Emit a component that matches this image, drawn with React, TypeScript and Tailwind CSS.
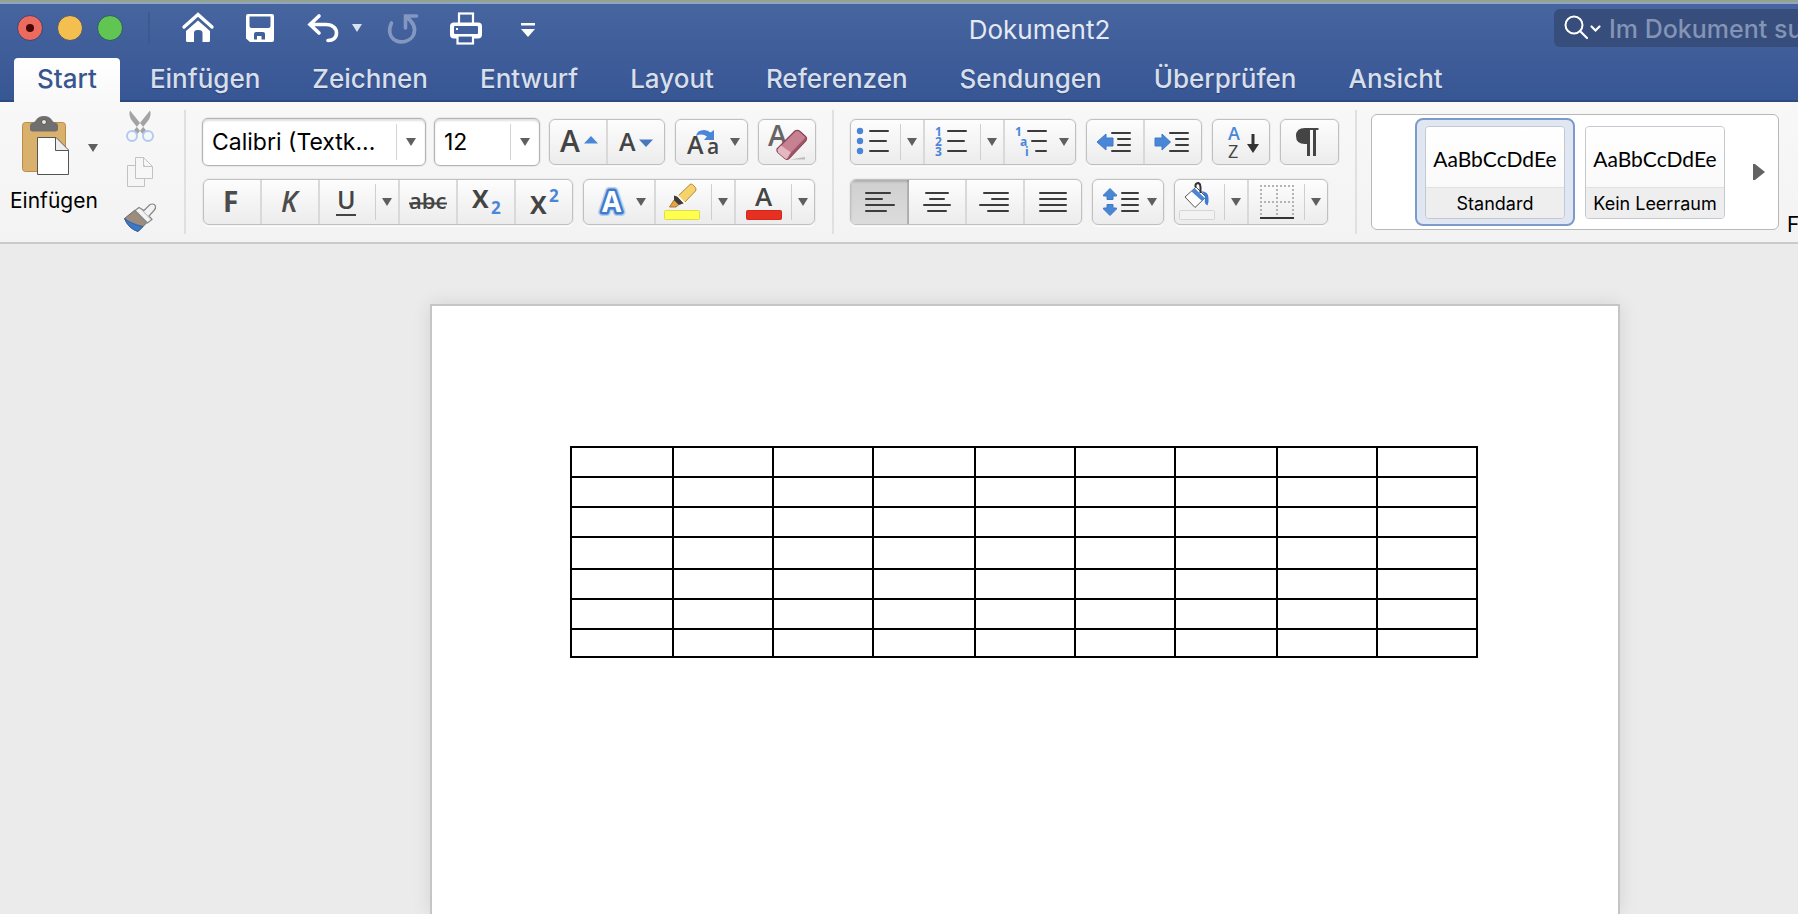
import type { ReactNode } from "react";

const INK = "#444";
const BLUE = "#4a86d8";

/* Icons are drawn in window coordinates, so the view box gives both place and size. */
function Icon({ x, y, w, h = 44, children }: { x: number; y: number; w: number; h?: number; children: ReactNode }) {
  return (
    <svg aria-hidden="true" width={w} height={h} viewBox={`${x} ${y} ${w} ${h}`} className="block shrink-0">
      {children}
    </svg>
  );
}

function Caret({ className = "fill-[#5f5f5f]" }: { className?: string }) {
  return (
    <svg aria-hidden="true" width="10" height="8" viewBox="0 0 10 8" className={`block shrink-0 ${className}`}>
      <path d="M0 0H10L5 8Z" />
    </svg>
  );
}

function Group({ children }: { children: ReactNode }) {
  return (
    <div className="flex h-[46px] shrink-0 overflow-hidden rounded-md border border-[#c0c0c0] bg-linear-to-b from-[#fdfdfd] to-[#ececec] shadow-[0_0_0_1px_rgba(0,0,0,0.04),0_2px_0_rgba(255,255,255,0.8)]">
      {children}
    </div>
  );
}

function Tool({ label, line = false, active = false, children }: { label: string; line?: boolean; active?: boolean; children: ReactNode }) {
  return (
    <button
      type="button"
      aria-label={label}
      title={label}
      aria-pressed={active || undefined}
      className={`relative block shrink-0 ${active ? "bg-linear-to-b from-[#cfcfcf] to-[#dcdcdc] shadow-[inset_0_2px_2px_rgba(0,0,0,0.15),inset_-2px_0_0_#b4b4b4]" : line ? "shadow-[inset_-2px_0_0_#d9d9d9]" : ""}`}
    >
      {children}
    </button>
  );
}

function More({ label, line = false }: { label: string; line?: boolean }) {
  return (
    <>
      <span className="my-1 w-px shrink-0 bg-[#cfcfcf]" />
      <button
        type="button"
        aria-label={label}
        className={`flex items-center justify-center ${line ? "w-6 pr-[2px] shadow-[inset_-2px_0_0_#d9d9d9]" : "w-[22px]"}`}
      >
        <Caret />
      </button>
    </>
  );
}

function Combo({ label, value, className }: { label: string; value: string; className: string }) {
  return (
    <div className={`flex h-12 shrink-0 items-center rounded-md border border-[#b4b4b4] bg-white shadow-[inset_0_2px_2px_rgba(0,0,0,0.12),0_0_0_1px_rgba(0,0,0,0.05)] ${className}`}>
      <select aria-label={label} defaultValue={value} className="min-w-0 flex-1 appearance-none bg-transparent pl-[9px] text-[23px] leading-8 text-black outline-none">
        <option>{value}</option>
      </select>
      <span className="h-9 w-px bg-[#d4d4d4]" />
      <span className="pointer-events-none flex w-7 justify-center">
        <Caret />
      </span>
    </div>
  );
}

function Divider() {
  return <span className="mt-2 h-[124px] w-[2px] shrink-0 bg-[#e0e0e0]" />;
}

/* Horizontal text lines: [x1, x2, y] */
function Lines({ at }: { at: number[][] }) {
  return (
    <g stroke="#3c3c3c" strokeWidth="2" strokeLinecap="round">
      {at.map(([a, b, y]) => (
        <line key={y} x1={a + 1} x2={b - 1} y1={y} y2={y} />
      ))}
    </g>
  );
}

function IconCaret({ x, y }: { x: number; y: number }) {
  return <path d={`M${x} ${y}h10l-5 8z`} fill="#5f5f5f" />;
}

const sans = { fontFamily: '"Open Sans", sans-serif' };

function TitleBar() {
  return (
    <div className="flex h-12 shrink-0 items-start">
      <div className="flex gap-[14px] pt-[11px] pl-[17px]">
        <button type="button" aria-label="Schließen" className="flex size-[26px] items-center justify-center rounded-full border border-[#3d4673] bg-[#ec6a5e]">
          <span className="size-2 rounded-full bg-[#460804]" />
        </button>
        <button type="button" aria-label="Minimieren" className="size-[26px] rounded-full border border-[#4a5573] bg-[#f5bf4f]" />
        <button type="button" aria-label="Vergrößern" className="size-[26px] rounded-full border border-[#2c5a6a] bg-[#61c554]" />
      </div>
      <span className="mt-2 ml-[25px] h-8 w-[2px] bg-[#3e598f]" />
      <div className="ml-[28px] flex pt-[4px]">
        <button type="button" aria-label="Startseite">
          <Icon x={178} y={8} w={40} h={40}>
            <path d="M184 27L198 14.500L212 27" fill="none" stroke="#fff" strokeWidth="3.4" strokeLinecap="round" />
            <path d="M198 20.500L210 31V40.500Q210 42 208.500 42H202.500V33Q202.500 30 198.500 30H197.500Q194 30 194 33V42H187.500Q186 42 186 40.500V31Z" fill="#fff" />
          </Icon>
        </button>
        <button type="button" aria-label="Speichern" className="ml-[14px]">
          <Icon x={232} y={8} w={56} h={40}>
            <path fillRule="evenodd" fill="#fff" d="M248 14H272Q274 14 274 16V40Q274 42 272 42H250L246 38.500V16Q246 14 248 14ZM249.500 16.500V26Q249.500 28 251.500 28H268.500Q270.500 28 270.500 26V16.500ZM256 32Q254 32 254 34V39.500H257V36H261.500V39.500H265V34Q265 32 263 32Z" />
          </Icon>
        </button>
        <button type="button" aria-label="Rückgängig" className="ml-[14px]">
          <Icon x={302} y={8} w={40} h={40}>
            <path d="M319 16L310 24.500L319 33M311 24.500H326C333 24.500 336.500 28.500 336.500 33C336.500 38 333 40.500 328 40.500" fill="none" stroke="#fff" strokeWidth="3.6" strokeLinecap="round" />
          </Icon>
        </button>
        <button type="button" aria-label="Rückgängig-Verlauf" className="flex w-[30px] items-center justify-center">
          <Caret className="fill-[#dbe2ef]" />
        </button>
        <button type="button" aria-label="Wiederholen" disabled className="ml-[12px]">
          <Icon x={384} y={8} w={40} h={40}>
            <path d="M391.500 23C388 30 389.500 37 395.500 40.500C402 43.500 410 41.500 413.500 35C416.500 28 413 22 406.500 17M405.500 28V16H416.500" fill="none" stroke="#8397c0" strokeWidth="3.6" strokeLinecap="round" />
          </Icon>
        </button>
        <button type="button" aria-label="Drucken" className="ml-[22px]">
          <Icon x={446} y={8} w={40} h={40}>
            <rect x="459" y="13.500" width="14" height="14" fill="none" stroke="#fff" strokeWidth="2.2" />
            <rect x="450" y="22.500" width="32" height="16" rx="4" fill="#fff" />
            <rect x="454" y="26" width="24" height="8" rx="1" fill="#43619e" />
            <rect x="456" y="28" width="2" height="2" fill="#fff" />
            <rect x="457.500" y="35.500" width="15.500" height="8" fill="#3f5d9a" stroke="#fff" strokeWidth="2.2" />
          </Icon>
        </button>
        <button type="button" aria-label="Symbolleiste anpassen" className="ml-[22px]">
          <Icon x={508} y={8} w={40} h={40}>
            <path d="M521 23H535V25.500H521ZM521 29H535L528 37Z" fill="#fff" />
          </Icon>
        </button>
      </div>
      <h1 className="flex-1 pt-[10px] pr-[23px] text-center text-[26px] leading-8 text-[#e4e9f3]">Dokument2</h1>
      <label className="mt-[5px] flex h-[38px] w-[244px] shrink-0 items-center overflow-hidden rounded-l-md bg-[#374d7c] pl-[9px]">
        <Icon x={1564} y={12} w={40} h={32}>
          <circle cx="1575" cy="25" r="8.500" fill="none" stroke="#fff" strokeWidth="2" />
          <path d="M1581 31L1588 38M1592.500 26.500L1596.500 30.500L1600.500 26.500" fill="none" stroke="#fff" strokeWidth="2.2" strokeLinecap="round" />
        </Icon>
        <input type="text" aria-label="Im Dokument suchen" placeholder="Im Dokument suchen" className="w-80 shrink-0 bg-transparent pt-[2px] pl-[6px] text-[25px] leading-8 font-medium text-white outline-none placeholder:text-[#8494b6]" />
      </label>
    </div>
  );
}

const TABS = ["Start", "Einfügen", "Zeichnen", "Entwurf", "Layout", "Referenzen", "Sendungen", "Überprüfen", "Ansicht"];

function Tabs() {
  return (
    <nav className="flex flex-1 items-end gap-2 pl-[14px]">
      {TABS.map((tab) => (
        <a
          key={tab}
          href="#"
          aria-current={tab === "Start" ? "page" : undefined}
          className={`relative -mb-[2px] block h-11 pt-[5px] text-[26px] leading-8 font-medium ${tab === "Start" ? "rounded-t bg-linear-to-b from-white to-[#f8f8f8] px-[23px] text-[#37568f]" : "px-[22px] text-[#d8dfec] [text-shadow:0_1px_1px_rgba(0,0,0,0.25)]"}`}
        >
          {tab}
        </a>
      ))}
    </nav>
  );
}

function ClipboardSection() {
  return (
    <div className="flex shrink-0">
      <button type="button" className="mt-3 ml-2 flex w-[94px] flex-col items-start">
        <Icon x={8} y={114} w={94} h={64}>
          <rect x="22.500" y="122.500" width="43" height="49" rx="3" fill="#d9b06c" stroke="#b98d48" />
          <path d="M33 131.500Q30 131.500 30 129V126Q30 123 33 122.500C36 122.500 36 116 44 116C52 116 52 122.500 55 122.500Q58 123 58 126V129Q58 131.500 55 131.500Z" fill="#6f6f6f" />
          <circle cx="44" cy="122" r="2.500" fill="#f0e6d4" stroke="#555" />
          <path d="M37.500 137.500H56L68.500 150V174.500H37.500Z" fill="#fff" stroke="#555" />
          <path d="M55.500 138V150.500H68" fill="#eee" stroke="#555" />
          <IconCaret x={88} y={144} />
        </Icon>
        <span className="mt-[11px] pl-[2px] text-[21px] leading-6 text-black">Einfügen</span>
      </button>
      <div className="mt-[6px] ml-5 flex flex-col gap-[10px]">
        <button type="button" aria-label="Ausschneiden">
          <Icon x={122} y={108} w={36} h={36}>
            <path d="M130 110.500L146.500 131L142.500 134L131 119.500Q128.500 114 130 110.500ZM150 110.500L133.500 131L137.500 134L149 119.500Q151.500 114 150 110.500Z" fill="#a3a3a3" />
            <circle cx="132" cy="136" r="5" fill="#f4f7fc" stroke="#b3caee" strokeWidth="2" />
            <circle cx="148" cy="136" r="5" fill="#f4f7fc" stroke="#b3caee" strokeWidth="2" />
          </Icon>
        </button>
        <button type="button" aria-label="Kopieren">
          <Icon x={122} y={154} w={36} h={36}>
            <path d="M127.500 165.500H144.500V186.500H127.500Z" fill="#f5f5f5" stroke="#c2c2c2" />
            <path d="M135.500 157.500H143.500L152.500 166.500V178.500H135.500ZM143.500 157.500V166.500H152.500" fill="#f7f7f7" stroke="#c2c2c2" />
          </Icon>
        </button>
        <button type="button" aria-label="Format übertragen">
          <Icon x={122} y={200} w={36} h={36}>
            <path d="M124.500 218.500L135 210L147 222.500L138 231.500Q129 229 124.500 218.500Z" fill="#9c8c7e" stroke="#75665a" />
            <path d="M124.500 218.500Q131 224 143 226.500L138 231.500Q128 228 124.500 218.500Z" fill="#3c78c8" stroke="#2f62a8" />
            <path d="M135 210.500L139 207.500L144 210.500L150 204.500Q154 203 155.500 206Q156 208.500 154 210.500L149 216L152 219.500L147.500 223Z" fill="#f2f2f2" stroke="#868686" strokeWidth="1.200" />
            <path d="M141 209L150 218.500" stroke="#b0b0b0" />
          </Icon>
        </button>
      </div>
    </div>
  );
}

function FontSection() {
  return (
    <div className="mt-4 ml-4 flex shrink-0 flex-col gap-[13px]">
      <div className="flex items-center">
        <Combo label="Schriftart" value="Calibri (Textk..." className="w-[224px]" />
        <Combo label="Schriftgrad" value="12" className="ml-2 w-[106px]" />
        <div className="ml-[9px] flex gap-[10px]">
          <Group>
            <Tool label="Schrift vergrößern" line>
              <Icon x={550} y={120} w={58}>
                <text x="560" y="152" fontSize="30" fontWeight="600" fill={INK} style={sans}>A</text>
                <path d="M584 143.500L591 136L598 143.500Z" fill={BLUE} />
              </Icon>
            </Tool>
            <Tool label="Schrift verkleinern">
              <Icon x={608} y={120} w={56}>
                <text x="619" y="151" fontSize="25" fontWeight="600" fill={INK} style={sans}>A</text>
                <path d="M639 139.500H653L646 147Z" fill="#4678bd" />
              </Icon>
            </Tool>
          </Group>
          <Group>
            <Tool label="Groß-/Kleinschreibung">
              <Icon x={676} y={120} w={71}>
                <text x="687" y="154" fontSize="25" fontWeight="600" fill={INK} style={sans}>A</text>
                <text x="707" y="154" fontSize="21" fontWeight="600" fill={INK} style={sans}>a</text>
                <path d="M696 136Q697 130 704 130Q708 130 710.500 132.500L714 130V140H704L707 136.500Q702 133 696 136Z" fill={BLUE} />
                <IconCaret x={730} y={138} />
              </Icon>
            </Tool>
          </Group>
          <Group>
            <Tool label="Formatierung löschen">
              <Icon x={758} y={120} w={56}>
                <text x="767" y="146" fontSize="29" fontWeight="600" fill="#666" style={sans}>A</text>
                <path d="M789 159.500L804 157V159.500Z" fill="#bbb" />
                <path d="M776 149L794 131Q796.500 129.500 799 131.500L804.500 136.500Q806.500 138.500 804.500 141L788 158.500Q786 160 784 158.500L777 152.500Q775.500 151 776 149Z" fill="#c78291" stroke="#8b4456" strokeWidth="1.300" />
                <path d="M776.500 149.500L780 145.500L790 152.500L786 159L784 158.500L777 152.500Z" fill="#e4b7c1" />
                <path d="M790 152.500L805 137V140L788 158.500L786 159Z" fill="#a05468" />
              </Icon>
            </Tool>
          </Group>
        </div>
      </div>
      <div className="flex gap-[10px] pl-px">
        <Group>
          <Tool label="Fett" line>
            <Icon x={204} y={180} w={58}>
              <text x="223" y="212" fontSize="28" fontWeight="700" fill="#4c4c4c" style={sans}>F</text>
            </Icon>
          </Tool>
          <Tool label="Kursiv" line>
            <Icon x={262} y={180} w={58}>
              <text x="281" y="212" fontSize="28" fontWeight="600" fontStyle="italic" fill="#4c4c4c" style={sans}>K</text>
            </Icon>
          </Tool>
          <Tool label="Unterstrichen">
            <Icon x={320} y={180} w={55}>
              <text x="337" y="209" fontSize="25" fontWeight="600" fill={INK} style={sans}>U</text>
              <path d="M336 215H356" stroke={INK} strokeWidth="2" />
            </Icon>
          </Tool>
          <More label="Unterstreichungsart" line />
          <Tool label="Durchgestrichen" line>
            <Icon x={400} y={180} w={58}>
              <text x="409" y="209" fontSize="22" fontWeight="600" fill={INK} style={sans}>abc</text>
              <path d="M409 203.500H447" stroke={INK} strokeWidth="2" />
            </Icon>
          </Tool>
          <Tool label="Tiefgestellt" line>
            <Icon x={458} y={180} w={58}>
              <text x="472" y="208" fontSize="25" fontWeight="700" fill={INK} style={sans}>X</text>
              <text x="491" y="214" fontSize="17" fontWeight="700" fill={BLUE} style={sans}>2</text>
            </Icon>
          </Tool>
          <Tool label="Hochgestellt">
            <Icon x={516} y={180} w={56}>
              <text x="530" y="214" fontSize="25" fontWeight="700" fill={INK} style={sans}>X</text>
              <text x="549" y="202" fontSize="17" fontWeight="700" fill={BLUE} style={sans}>2</text>
            </Icon>
          </Tool>
        </Group>
        <Group>
          <Tool label="Texteffekte" line>
            <Icon x={584} y={180} w={72}>
              <text x="602" y="212" fontSize="28" fontWeight="700" fill="#9cc0ef" stroke="#9cc0ef" strokeWidth="8" strokeLinejoin="round" opacity="0.7" style={sans}>A</text>
              <text x="602" y="212" fontSize="28" fontWeight="700" fill="#fff" stroke="#3f7dcc" strokeWidth="5" strokeLinejoin="round" paintOrder="stroke" style={sans}>A</text>
              <IconCaret x={636} y={198} />
            </Icon>
          </Tool>
          <Tool label="Texthervorhebungsfarbe">
            <Icon x={656} y={180} w={55}>
              <rect x="664.500" y="210.500" width="35" height="9" rx="1" fill="#ffff4d" stroke="#dcdc50" />
              <path d="M669.500 207L674 200L679 204.500L676 207Z" fill="#e2a446" stroke="#a87a35" />
              <path d="M674 195.500L678.500 197L684.500 203L679 205L674 200Z" fill="#3c3c3c" />
              <path d="M677.500 196.500L690 184.500Q691 183.500 692.500 184.500L695.500 187.500Q696.500 189 695.500 191L684 203Z" fill="#f6d26d" stroke="#b38a3c" />
              <path d="M677.500 195.500L685 203.500" stroke="#fff" strokeWidth="1.800" />
            </Icon>
          </Tool>
          <More label="Weitere Hervorhebungsfarben" line />
          <Tool label="Schriftfarbe">
            <Icon x={736} y={180} w={55}>
              <text x="755" y="206" fontSize="26" fontWeight="600" fill={INK} style={sans}>A</text>
              <rect x="746.500" y="210.500" width="35" height="9" rx="1" fill="#e63022" stroke="#d02a1e" />
            </Icon>
          </Tool>
          <More label="Weitere Schriftfarben" />
        </Group>
      </div>
    </div>
  );
}

function ParagraphSection() {
  return (
    <div className="mt-[17px] ml-4 flex shrink-0 flex-col gap-[14px]">
      <div className="flex gap-[10px]">
        <Group>
          <Tool label="Aufzählungszeichen">
            <Icon x={852} y={120} w={49}>
              <g fill={BLUE}>
                <circle cx="861" cy="131" r="3.200" />
                <circle cx="861" cy="141" r="3.200" />
                <circle cx="861" cy="151" r="3.200" />
              </g>
              <Lines at={[[870, 890, 131], [870, 888, 141], [870, 890, 151]]} />
            </Icon>
          </Tool>
          <More label="Aufzählungszeichenbibliothek" line />
          <Tool label="Nummerierung">
            <Icon x={926} y={120} w={55}>
              <g fill={BLUE} fontSize="12" fontWeight="700" style={sans}>
                <text x="936" y="136">1</text>
                <text x="936" y="146">2</text>
                <text x="936" y="156">3</text>
              </g>
              <Lines at={[[948, 968, 131], [948, 966, 141], [948, 968, 151]]} />
            </Icon>
          </Tool>
          <More label="Nummerierungsbibliothek" line />
          <Tool label="Liste mit mehreren Ebenen">
            <Icon x={1006} y={120} w={70}>
              <g fill={BLUE} fontSize="12" fontWeight="700" style={sans}>
                <text x="1016" y="136">1</text>
                <text x="1021" y="146">a</text>
                <text x="1026" y="156">i</text>
              </g>
              <Lines at={[[1028, 1048, 131], [1032, 1048, 141], [1036, 1048, 151]]} />
              <IconCaret x={1060} y={138} />
            </Icon>
          </Tool>
        </Group>
        <Group>
          <Tool label="Einzug verkleinern" line>
            <Icon x={1088} y={120} w={58}>
              <Lines at={[[1112, 1132, 133], [1118, 1132, 139], [1118, 1132, 145], [1112, 1132, 151]]} />
              <path d="M1098 142L1107 134V138H1114V146H1107V150Z" fill={BLUE} stroke="#3f78c8" strokeLinejoin="round" />
            </Icon>
          </Tool>
          <Tool label="Einzug vergrößern">
            <Icon x={1146} y={120} w={56}>
              <Lines at={[[1170, 1190, 133], [1176, 1190, 139], [1176, 1190, 145], [1170, 1190, 151]]} />
              <path d="M1171.500 142L1163 134V138H1156V146H1163V150Z" fill={BLUE} stroke="#3f78c8" strokeLinejoin="round" />
            </Icon>
          </Tool>
        </Group>
        <Group>
          <Tool label="Sortieren">
            <Icon x={1214} y={120} w={56}>
              <text x="1229" y="140" fontSize="18" fontWeight="600" fill={BLUE} style={sans}>A</text>
              <text x="1229" y="158" fontSize="18" fill="#444" style={sans}>Z</text>
              <path d="M1252.500 134H1255.500V144H1260L1254 153L1248 144H1252.500Z" fill="#333" />
            </Icon>
          </Tool>
        </Group>
        <Group>
          <Tool label="Formatierungszeichen anzeigen">
            <Icon x={1282} y={120} w={57}>
              <path d="M1306 128H1319.500V130H1317V156H1314V130H1311V156H1308V144H1306Q1297 144 1297 136Q1297 128 1306 128Z" fill={INK} />
            </Icon>
          </Tool>
        </Group>
      </div>
      <div className="flex gap-[10px]">
        <Group>
          <Tool label="Linksbündig" active>
            <Icon x={852} y={180} w={58}>
              <Lines at={[[866, 892, 193], [866, 884, 199], [866, 896, 205], [866, 888, 211]]} />
            </Icon>
          </Tool>
          <Tool label="Zentriert" line>
            <Icon x={910} y={180} w={58}>
              <Lines at={[[926, 950, 193], [930, 946, 199], [924, 952, 205], [928, 948, 211]]} />
            </Icon>
          </Tool>
          <Tool label="Rechtsbündig" line>
            <Icon x={968} y={180} w={58}>
              <Lines at={[[984, 1010, 193], [992, 1010, 199], [980, 1010, 205], [988, 1010, 211]]} />
            </Icon>
          </Tool>
          <Tool label="Blocksatz">
            <Icon x={1026} y={180} w={56}>
              <Lines at={[[1040, 1068, 193], [1040, 1068, 199], [1040, 1068, 205], [1040, 1068, 211]]} />
            </Icon>
          </Tool>
        </Group>
        <Group>
          <Tool label="Zeilenabstand">
            <Icon x={1094} y={180} w={70}>
              <path d="M1111 188.500L1117.500 195V196H1114V199.500H1108V196H1104.500V195ZM1111 215.500L1117.500 209V208H1114V204.500H1108V208H1104.500V209Z" fill={BLUE} stroke="#3f78c8" strokeLinejoin="round" />
              <Lines at={[[1122, 1140, 193], [1122, 1140, 199], [1122, 1140, 205], [1122, 1140, 211]]} />
              <IconCaret x={1148} y={198} />
            </Icon>
          </Tool>
        </Group>
        <Group>
          <Tool label="Schattierung">
            <Icon x={1176} y={180} w={49}>
              <rect x="1180.500" y="210.500" width="35" height="9" rx="1" fill="#f2f2f2" stroke="#d5d5d5" />
              <path d="M1186 197L1197 187L1207 197L1196 207.500Z" fill="#fff" stroke="#555" strokeLinejoin="round" />
              <path d="M1192.500 191.500L1196 188.500L1206 198.500L1203 201Z" fill={BLUE} />
              <path d="M1202 191Q1209.500 191.500 1209.500 198Q1210 202 1208.500 205.500Q1205 204 1206 199.500Q1206.500 195 1202 191Z" fill="#3f7ad0" />
              <path d="M1196.500 187V185Q1197 183 1199.500 183Q1201.500 184 1201.500 187V193" fill="none" stroke="#333" strokeWidth="2" />
            </Icon>
          </Tool>
          <More label="Schattierungsfarben" line />
          <Tool label="Rahmenlinien">
            <Icon x={1250} y={180} w={55}>
              <path d="M1261 186H1295M1261 202H1295M1262 189V216M1278 189V216M1294 189V216" fill="none" stroke="#b4b4b4" strokeWidth="2" strokeDasharray="2 2" />
              <path d="M1261 218H1295" stroke="#333" strokeWidth="2" />
            </Icon>
          </Tool>
          <More label="Weitere Rahmenlinien" />
        </Group>
      </div>
    </div>
  );
}

function StyleCard({ name, selected = false }: { name: string; selected?: boolean }) {
  return (
    <button
      type="button"
      aria-pressed={selected}
      className={`flex h-[108px] w-40 shrink-0 flex-col rounded-lg border-2 px-2 pt-[6px] pb-[5px] ${selected ? "border-[#7d9bc9] bg-[#e1e7f2]" : "border-transparent"}`}
    >
      <span className="flex w-full flex-1 flex-col rounded border border-[#c4c8d0] bg-white">
        <span className="flex flex-1 items-center justify-center rounded-t bg-linear-to-b from-white to-[#fafafa] pt-[3px] font-[Lato,sans-serif] text-[21px] leading-6 text-black">
          AaBbCcDdEe
        </span>
        <span className="flex h-[31px] items-center justify-center rounded-b border-t border-[#e2e2e2] bg-[#eee] pt-px text-lg leading-6 whitespace-nowrap text-black">{name}</span>
      </span>
    </button>
  );
}

function StylesSection() {
  return (
    <div className="flex min-w-0 flex-1 overflow-hidden">
      <div className="mt-3 ml-[14px] flex h-[116px] w-[408px] shrink-0 items-center rounded-md border border-[#b8b8b8] bg-white pl-[43px]">
        <StyleCard name="Standard" selected />
        <StyleCard name="Kein Leerraum" />
        <button type="button" aria-label="Weitere Formatvorlagen" className="ml-[14px] p-1">
          <svg aria-hidden="true" width="12" height="16" viewBox="0 0 12 16" className="block">
            <path d="M0 0H2L12 8L2 16H0Z" fill="#636363" />
          </svg>
        </button>
      </div>
      <button type="button" className="mt-[111px] ml-2 h-6 shrink-0 text-[21px] leading-6 text-black">Formatbereich</button>
    </div>
  );
}

const COLUMNS = ["w-[102px]", "w-[100px]", "w-[100px]", "w-[102px]", "w-[100px]", "w-[100px]", "w-[102px]", "w-[100px]", "w-[100px]"];
const ROWS = ["h-[30px]", "h-[30px]", "h-[30px]", "h-8", "h-[30px]", "h-[30px]", "h-7"];

function DocumentPage() {
  return (
    <main className="flex flex-1 bg-[#ebebeb] pt-[60px] pr-[178px] pl-[430px]">
      <article className="flex-1 border-2 border-b-0 border-[#c5c5c5] bg-white pt-[140px] pr-[140px] pl-[138px] shadow-[0_0_18px_rgba(0,0,0,0.1)]">
        <table className="w-full table-fixed border-separate border-spacing-0 border-t-2 border-l-2 border-black">
          <colgroup>
            {COLUMNS.map((width, i) => (
              <col key={i} className={width} />
            ))}
          </colgroup>
          <tbody>
            {ROWS.map((height, r) => (
              <tr key={r} className={height}>
                {COLUMNS.map((_, c) => (
                  <td key={c} className="border-r-2 border-b-2 border-black p-0" />
                ))}
              </tr>
            ))}
          </tbody>
        </table>
      </article>
    </main>
  );
}

export default function App() {
  return (
    <div className="flex min-h-screen flex-col overflow-hidden bg-[#ebebeb] font-[Inter,'Liberation_Sans',sans-serif]">
      <header className="flex h-[102px] shrink-0 flex-col border-t-2 border-b-2 border-t-[#90a58c] border-b-[#2d4a80] bg-linear-to-b from-[#47659f] to-[#375694]">
        <div className="h-[2px] shrink-0 bg-[#93a4c6]" />
        <TitleBar />
        <Tabs />
      </header>
      <div className="flex h-[142px] shrink-0 items-start overflow-hidden border-b-2 border-[#cacaca] bg-linear-to-b from-[#f8f8f8] to-[#f3f3f3]">
        <ClipboardSection />
        <span className="w-[26px] shrink-0" />
        <Divider />
        <FontSection />
        <span className="w-4 shrink-0" />
        <Divider />
        <ParagraphSection />
        <span className="w-4 shrink-0" />
        <Divider />
        <StylesSection />
      </div>
      <DocumentPage />
    </div>
  );
}
